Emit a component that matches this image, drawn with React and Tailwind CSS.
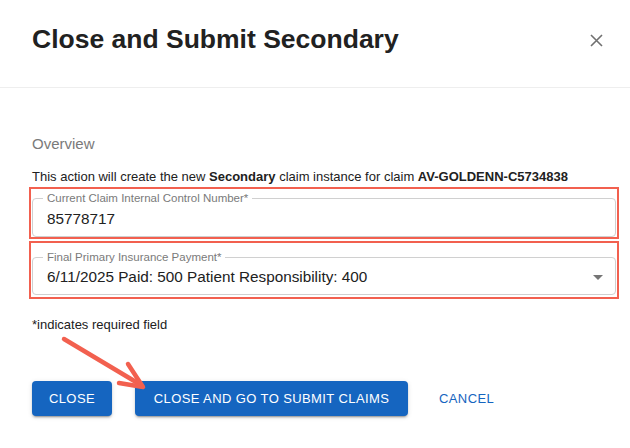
import React from "react";

export default function App() {
  return (
    <div className="relative w-[630px] h-[448px] bg-white overflow-hidden font-['Liberation_Sans',Arial,sans-serif] text-[#212121]">
      <div className="flex items-center justify-between h-[88px] pb-[8px] pl-[32px] pr-[27px] border-b border-[#eeeeee]">
        <h2 className="text-[26.5px] leading-none font-bold text-[#212121]">
          Close and Submit Secondary
        </h2>
        <svg width="13" height="13" viewBox="0 0 13 13" className="mt-[2px]">
          <path d="M1 1 L12 12 M12 1 L1 12" stroke="#707070" strokeWidth="1.6" fill="none" />
        </svg>
      </div>

      <div className="pl-[29px] pr-[11px]">
        <div className="mt-[47px] pl-[3px] text-[15px] leading-[18px] text-[#7a7a7a]">Overview</div>
        <div className="mt-[16px] pl-[3px] text-[13px] leading-[15px] text-[#212121]">
          This action will create the new <b>Secondary</b> claim instance for claim <b>AV-GOLDENN-C5734838</b>
        </div>

        <div className="mt-[3px] h-[52px] border-2 border-[#f2604f] px-[1px] pt-[9px]">
          <div className="relative h-[39px] rounded-[4px] border border-[#d0d0d0] flex items-center pl-[14px] pt-[3px]">
            <span className="absolute left-[10px] top-[-8px] px-[4px] bg-white text-[11.5px] leading-[14px] text-[#7a7a7a]">
              Current Claim Internal Control Number*
            </span>
            <span className="text-[15.3px] leading-[18px] text-[#212121]">85778717</span>
          </div>
        </div>

        <div className="mt-[2px] h-[58px] border-2 border-[#f2604f] px-[1px] pt-[14px]">
          <div className="relative h-[38px] rounded-[4px] border border-[#d0d0d0] flex items-center justify-between pl-[14px] pr-[12px] pt-[2px]">
            <span className="absolute left-[10px] top-[-8px] px-[4px] bg-white text-[11.5px] leading-[14px] text-[#7a7a7a]">
              Final Primary Insurance Payment*
            </span>
            <span className="text-[15.3px] leading-[18px] text-[#212121]">
              6/11/2025 Paid: 500 Patient Responsibility: 400
            </span>
            <svg width="10" height="5" viewBox="0 0 10 5">
              <path d="M0 0 L10 0 L5 5 Z" fill="#757575" />
            </svg>
          </div>
        </div>

        <div className="mt-[18px] pl-[3px] text-[13px] leading-[16px] text-[#212121]">*indicates required field</div>
      </div>

      <div className="flex items-center mt-[48px] pl-[32px]">
        <button className="h-[35px] w-[80px] rounded-[4px] bg-[#1565c0] text-white text-[13px] tracking-[0.4px] shadow-[0_3px_1px_-2px_rgba(0,0,0,0.2),0_2px_2px_0_rgba(0,0,0,0.14),0_1px_5px_0_rgba(0,0,0,0.12)]">
          CLOSE
        </button>
        <button className="ml-[23px] h-[35px] w-[273px] rounded-[4px] bg-[#1565c0] text-white text-[13px] tracking-[0.4px] shadow-[0_3px_1px_-2px_rgba(0,0,0,0.2),0_2px_2px_0_rgba(0,0,0,0.14),0_1px_5px_0_rgba(0,0,0,0.12)]">
          CLOSE AND GO TO SUBMIT CLAIMS
        </button>
        <button className="ml-[23px] h-[35px] px-[8px] text-[#1565c0] text-[13px] tracking-[0.4px]">
          CANCEL
        </button>
      </div>

      <svg className="absolute left-0 top-0 pointer-events-none" width="630" height="448" viewBox="0 0 630 448">
        <g stroke="#f2604f" strokeWidth="4.5" strokeLinecap="round" strokeLinejoin="round" fill="none">
          <path d="M64 339 L141 385" />
          <path d="M128 364 L143 387 L119 383" />
        </g>
      </svg>
    </div>
  );
}
